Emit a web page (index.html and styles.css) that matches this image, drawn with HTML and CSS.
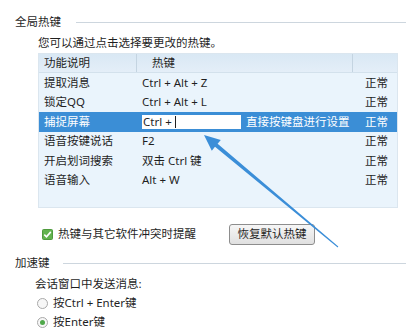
FILE: index.html
```html
<!DOCTYPE html>
<html>
 <head>
     <title>热键设置</title>
     <link rel="stylesheet" href="styles.css">
     <meta charset="UTF-8">
 </head>
 <body>
    <div class="group-title"><span>全局热键</span><i class="rule"></i></div>
    <div class="tip">您可以通过点击选择要更改的热键。</div>

    <div class="keys">
      <div class="row head">
        <div class="c1">功能说明</div>
        <div class="c2">热键</div>
        <div class="c3"></div>
      </div>
      <div class="row">
        <div class="c1">提取消息</div>
        <div class="c2">Ctrl + Alt + Z</div>
        <div class="c3">正常</div>
      </div>
      <div class="row">
        <div class="c1">锁定QQ</div>
        <div class="c2">Ctrl + Alt + L</div>
        <div class="c3">正常</div>
      </div>
      <div class="row sel">
        <div class="c1">捕捉屏幕</div>
        <div class="c2">
          <span class="edit">Ctrl +<b class="caret"></b></span>
          <span class="hint">直接按键盘进行设置</span>
        </div>
        <div class="c3">正常</div>
      </div>
      <div class="row">
        <div class="c1">语音按键说话</div>
        <div class="c2">F2</div>
        <div class="c3">正常</div>
      </div>
      <div class="row">
        <div class="c1">开启划词搜索</div>
        <div class="c2">双击 Ctrl 键</div>
        <div class="c3">正常</div>
      </div>
      <div class="row">
        <div class="c1">语音输入</div>
        <div class="c2">Alt + W</div>
        <div class="c3">正常</div>
      </div>
    </div>

    <div class="opts">
      <label class="chk">
        <svg width="11" height="11" viewBox="0 0 11 11">
          <rect x="0.5" y="0.5" width="10" height="10" rx="1" fill="#62b34e" stroke="#4f9a3d"/>
          <path d="M2.3 5.6 L4.5 7.8 L8.8 2.9" fill="none" stroke="#ffffff" stroke-width="1.6"/>
        </svg>
        热键与其它软件冲突时提醒
      </label>
      <button class="btn">恢复默认热键</button>
    </div>

    <div class="group-title second"><span>加速键</span><i class="rule"></i></div>
    <div class="tip2">会话窗口中发送消息:</div>
    <div class="radio"><span class="dot"></span>按Ctrl + Enter键</div>
    <div class="radio"><span class="dot on"></span>按Enter键</div>

    <!-- 标注箭头 -->
    <svg class="arrow" width="406" height="331" viewBox="0 0 406 331">
      <polygon points="204,135 220.8,139.9 217.6,143.8 338.3,246.6 337.7,247.4 215,146.8 211.8,150.7" fill="#3b8ed8"/>
    </svg>
 </body>
</html>
```

FILE: styles.css
```css
body {
    margin: 0;
    width: 406px;
    height: 331px;
    background: #ffffff;
    color: #1f1f1f;
    font-family: "Noto Sans", "Noto Sans CJK SC", sans-serif;
    font-size: 11.5px;
    line-height: 14px;
    position: relative;
    overflow: hidden;
}
.group-title {display: flex; align-items: center; height: 14px; padding: 15px 0 0 15px;}
.group-title span {margin-right: 15px;}
.group-title .rule {flex: 1; height: 1px; background: #cdd6de;}
.group-title.second {padding-top: 12px;}
.group-title.second span {margin-right: 13px;}

.tip {padding: 7px 0 0 38px; height: 14px;}

.keys {
    margin: 3px 0 0 38px;
    width: 360px;
    height: 155px;
    background: #eaf4fc;
    border: 1px solid #dbe6ef;
    box-sizing: border-box;
}
.row {display: grid; grid-template-columns: 98px 216px 1fr; height: 19.5px; align-items: center;}
.row.head {height: 18px; background: linear-gradient(#d9e8f4, #e4eef8); border-bottom: 1px solid #d3e1ec;}
.row div {height: 100%; display: flex; align-items: center;}
.c1 {padding-left: 5px;}
.c2 {padding-left: 5px;}
.c3 {padding-left: 12px;}
.head .c1 {border-right: 1px solid #c4d4e1;}
.head .c2 {padding-left: 15px; border-right: 1px solid #c4d4e1;}

.row.sel {background: #3b8ed6; color: #ffffff;}
.edit {
    display: flex; align-items: center;
    width: 99px; height: 14px;
    background: #ffffff; color: #1f1f1f;
    padding-left: 1px; box-sizing: border-box;
}
.caret {display: inline-block; width: 1px; height: 12px; background: #202020; margin-left: 3px;}
.hint {margin-left: 5px;}

.opts {display: flex; align-items: center; height: 20px; margin-top: 16px;}
.chk {display: flex; align-items: center; gap: 5px; margin-left: 42px; width: 187px;}
.btn {
    height: 21px; width: 86px;
    padding: 0;
    font: inherit; color: #1f1f1f;
    background: linear-gradient(#f6f6f6, #e0e0e0);
    border: 1px solid #8d8d8d;
    border-radius: 3px;
}

.tip2 {padding: 7px 0 0 35px; height: 14px;}
.radio {display: flex; align-items: center; gap: 5px; margin: 5px 0 0 37px; height: 14px;}
.dot {
    width: 11px; height: 11px; box-sizing: border-box;
    border: 1px solid #a9a9a9; border-radius: 50%;
    background: #f7f7f7;
    display: flex; align-items: center; justify-content: center;
}
.dot.on::after {content: ""; width: 5px; height: 5px; border-radius: 50%; background: #4fa84a;}

.arrow {position: absolute; left: 0; top: 0; pointer-events: none;}
```
